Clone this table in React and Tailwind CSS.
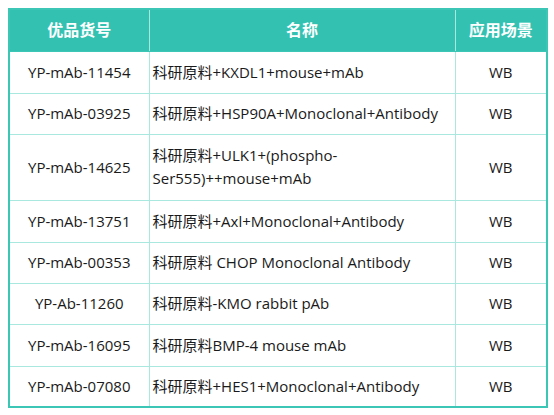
const ROWS = [
  { sku: "YP-mAb-11454", name: "科研原料+KXDL1+mouse+mAb", h: "h-[42px]" },
  { sku: "YP-mAb-03925", name: "科研原料+HSP90A+Monoclonal+Antibody", h: "h-[41px]" },
  { sku: "YP-mAb-14625", name: ["科研原料+ULK1+(phospho-", "Ser555)++mouse+mAb"], h: "h-[66px]" },
  { sku: "YP-mAb-13751", name: "科研原料+Axl+Monoclonal+Antibody", h: "h-[42px]" },
  { sku: "YP-mAb-00353", name: "科研原料 CHOP Monoclonal Antibody", h: "h-[41px]" },
  { sku: "YP-Ab-11260", name: "科研原料-KMO rabbit pAb", h: "h-[41px]" },
  { sku: "YP-mAb-16095", name: "科研原料BMP-4 mouse mAb", h: "h-[42px]" },
  { sku: "YP-mAb-07080", name: "科研原料+HES1+Monoclonal+Antibody", h: "h-[41px]" },
];

export default function App() {
  return (
    <div
      className="w-[554px] h-[415px] bg-white pt-[8px] pl-[8px]"
      style={{ fontFamily: "'Open Sans', 'Noto Sans CJK SC', sans-serif" }}
    >
      <table className="w-[538px] table-fixed border-collapse border-2 border-[#3cc6b6] text-[15px] text-[#1a1a1a]">
        <colgroup>
          <col className="w-[140px]" />
          <col className="w-[306px]" />
          <col className="w-[92px]" />
        </colgroup>
        <thead>
          <tr className="h-[42px] bg-[#33c2b2] text-white text-[16px] font-bold">
            <th className="border border-[#3cc6b6] border-r-[#a8e8de] font-bold">优品货号</th>
            <th className="border border-[#3cc6b6] border-r-[#a8e8de] font-bold">名称</th>
            <th className="border border-[#3cc6b6] font-bold">应用场景</th>
          </tr>
        </thead>
        <tbody>
          {ROWS.map((r) => (
            <tr key={r.sku} className={r.h}>
              <td className="border border-[#a8e8de] text-center">{r.sku}</td>
              <td className="border border-[#a8e8de] pl-[3px] leading-[23px]">
                {Array.isArray(r.name) ? (
                  <>
                    {r.name[0]}
                    <br />
                    {r.name[1]}
                  </>
                ) : (
                  r.name
                )}
              </td>
              <td className="border border-[#a8e8de] text-center">WB</td>
            </tr>
          ))}
        </tbody>
      </table>
    </div>
  );
}
